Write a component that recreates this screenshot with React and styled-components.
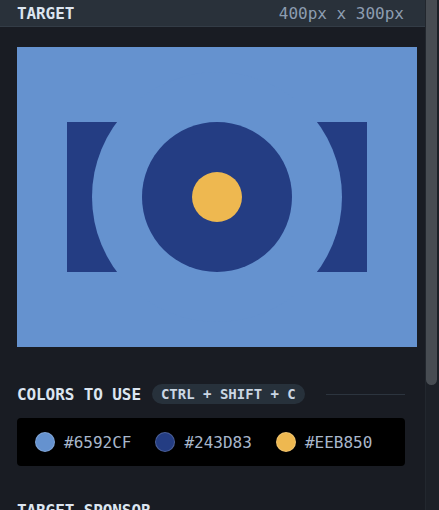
import React from 'react'
import styled, { createGlobalStyle } from 'styled-components'

const colors = ['#6592CF', '#243D83', '#EEB850']

const Global = createGlobalStyle`
  html, body {
    margin: 0;
    padding: 0;
    background: #191c23;
    overflow: hidden;
  }
  * {
    box-sizing: border-box;
  }
`

const Frame = styled.div`
  display: flex;
  width: 439px;
  height: 510px;
  overflow: hidden;
  font-family: "DejaVu Sans Mono", "Liberation Mono", monospace;
`

const Panel = styled.div`
  flex: 1;
  min-width: 0;
  background: #191c23;
`

const Header = styled.div`
  display: flex;
  align-items: center;
  justify-content: space-between;
  height: 27px;
  padding: 0 21px 0 17px;
  background: #29313a;
  border-bottom: 1px solid #333c46;
`

const Title = styled.span`
  font-size: 16px;
  font-weight: bold;
  color: #dce5f0;
  letter-spacing: -0.1px;
`

const Size = styled.span`
  font-size: 16px;
  color: #8d9db1;
`

const Body = styled.div`
  padding: 20px 20px 0 17px;
`

const Target = styled.svg`
  display: block;
  width: 400px;
  height: 300px;
`

const SectionHead = styled.div`
  display: flex;
  align-items: center;
  height: 20px;
  margin-top: ${({ $top }) => $top}px;
`

const Line = styled.div`
  flex: 1;
  height: 1px;
  margin-left: 21px;
  background: #2c343e;
`

const Badge = styled.span`
  margin-left: 11px;
  padding: 0 9px;
  height: 20px;
  line-height: 20px;
  border-radius: 10px;
  background: #27313b;
  color: #cbd6e3;
  font-size: 14px;
  font-weight: bold;
`

const Palette = styled.div`
  display: flex;
  align-items: center;
  gap: 24px;
  height: 48px;
  margin-top: 14px;
  padding: 0 18px;
  background: #000;
  border-radius: 4px;
`

const Swatch = styled.div`
  display: flex;
  align-items: center;
  gap: 9px;
`

const Dot = styled.span`
  width: 20px;
  height: 20px;
  border-radius: 50%;
  background: ${({ $c }) => $c};
  border: 1px solid rgba(255, 255, 255, 0.18);
`

const Code = styled.span`
  font-size: 16px;
  color: #a8b7cb;
`

const Track = styled.div`
  width: 14px;
  background: #1c2027;
  border-left: 1px solid #22272e;
`

const Thumb = styled.div`
  width: 11px;
  height: 385px;
  background: #474c52;
  border-radius: 0 0 6px 6px;
`

const App = () => (
  <Frame>
    <Global />
    <Panel>
      <Header>
        <Title>TARGET</Title>
        <Size>400px x 300px</Size>
      </Header>
      <Body>
        <Target viewBox="0 0 400 300">
          <rect width="400" height="300" fill="#6592CF" />
          <rect x="50" y="75" width="50" height="150" fill="#243D83" />
          <rect x="300" y="75" width="50" height="150" fill="#243D83" />
          <circle cx="200" cy="150" r="125" fill="#6592CF" />
          <circle cx="200" cy="150" r="75" fill="#243D83" />
          <circle cx="200" cy="150" r="25" fill="#EEB850" />
        </Target>
        <SectionHead $top={37}>
          <Title>COLORS TO USE</Title>
          <Badge>CTRL + SHIFT + C</Badge>
          <Line />
        </SectionHead>
        <Palette>
          {colors.map((c) => (
            <Swatch key={c}>
              <Dot $c={c} />
              <Code>{c}</Code>
            </Swatch>
          ))}
        </Palette>
        <SectionHead $top={34}>
          <Title>TARGET SPONSOR</Title>
          <Line />
        </SectionHead>
      </Body>
    </Panel>
    <Track>
      <Thumb />
    </Track>
  </Frame>
)

export default App
